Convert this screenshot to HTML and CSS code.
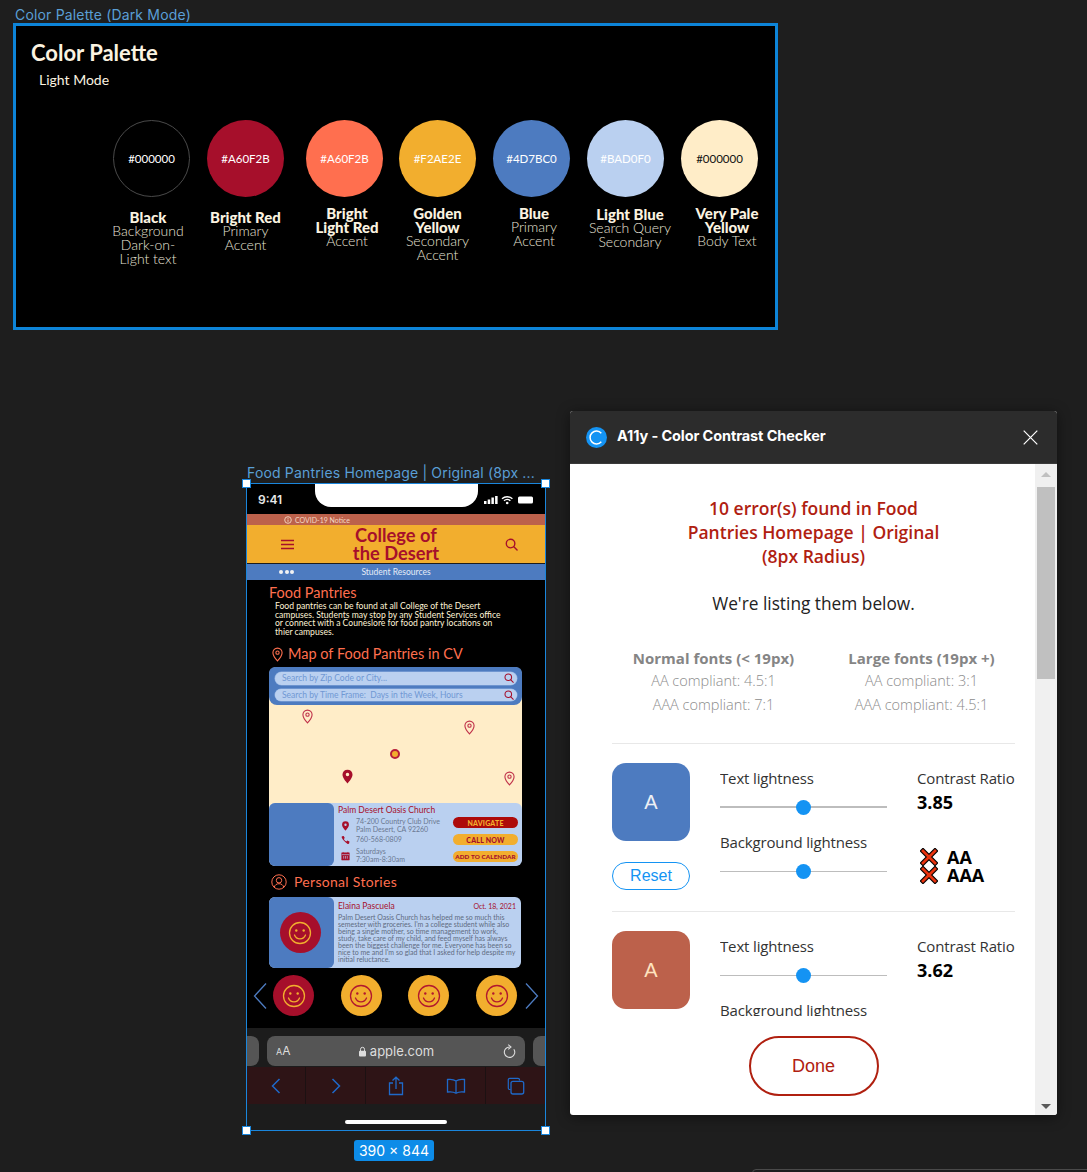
FILE: index.html
```html
<!DOCTYPE html>
<html lang="en">
<head>
<meta charset="utf-8">
<title>Design canvas</title>
<link rel="stylesheet" href="styles.css">
</head>
<body>
<svg class="defs" width="0" height="0" aria-hidden="true">
  <defs>
    <symbol id="pin-outline" viewBox="0 0 12 16"><path d="M6 1a5 5 0 0 0-5 5c0 3.5 5 9 5 9s5-5.500 5-9a5 5 0 0 0-5-5z" fill="none" stroke="currentColor" stroke-width="1.200"/><circle cx="6" cy="6" r="1.800" fill="none" stroke="currentColor" stroke-width="1.200"/></symbol>
    <symbol id="pin-solid" viewBox="0 0 12 16"><path fill-rule="evenodd" d="M6 .5A5.500 5.500 0 0 0 .5 6c0 3.800 5.500 9.500 5.500 9.500s5.500-5.700 5.500-9.500A5.500 5.500 0 0 0 6 .5zm0 7.300a1.900 1.900 0 1 1 0-3.800 1.900 1.900 0 0 1 0 3.800z" fill="currentColor"/></symbol>
    <symbol id="smile" viewBox="0 0 24 24"><circle cx="12" cy="12" r="10.500" fill="none" stroke="currentColor" stroke-width="1.300"/><circle cx="8.300" cy="9.500" r="1.200" fill="currentColor"/><circle cx="15.700" cy="9.500" r="1.200" fill="currentColor"/><path d="M6.500 14c1 2.600 3 3.800 5.500 3.800s4.500-1.200 5.500-3.800" fill="none" stroke="currentColor" stroke-width="1.300" stroke-linecap="round"/></symbol>
    <symbol id="search" viewBox="0 0 14 14"><circle cx="6" cy="6" r="4.600" fill="none" stroke="currentColor" stroke-width="1.500"/><path d="M9.500 9.500L13 13" stroke="currentColor" stroke-width="1.500" stroke-linecap="round"/></symbol>
    <symbol id="fail" viewBox="0 0 18 18"><path d="M3 3l12 12M15 3L3 15" stroke="#000" stroke-width="5" stroke-linecap="square"/><path d="M3 3l12 12M15 3L3 15" stroke="#e8330f" stroke-width="2.800" stroke-linecap="square"/></symbol>
  </defs>
</svg>

<div class="canvas-label palette-label">Color Palette (Dark Mode)</div>
<section class="palette">
  <h1 class="palette-title">Color Palette</h1>
  <p class="palette-sub">Light Mode</p>
  <div class="swatches">
    <div class="swatch">
      <div class="circle c-black">#000000</div>
      <div class="swatch-label lab-black"><b>Black</b>Background<br>Dark-on-<br>Light text</div>
    </div>
    <div class="swatch">
      <div class="circle c-red">#A60F2B</div>
      <div class="swatch-label"><b>Bright Red</b>Primary<br>Accent</div>
    </div>
    <div class="swatch sw-wide">
      <div class="circle c-lred">#A60F2B</div>
      <div class="swatch-label lab-lred"><b>Bright<br>Light Red</b>Accent</div>
    </div>
    <div class="swatch sw-tight">
      <div class="circle c-yellow">#F2AE2E</div>
      <div class="swatch-label lab-up"><b>Golden<br>Yellow</b>Secondary<br>Accent</div>
    </div>
    <div class="swatch">
      <div class="circle c-blue">#4D7BC0</div>
      <div class="swatch-label lab-blue"><b>Blue</b>Primary<br>Accent</div>
    </div>
    <div class="swatch">
      <div class="circle c-lblue">#BAD0F0</div>
      <div class="swatch-label lab-lblue"><b>Light Blue</b>Search Query<br>Secondary</div>
    </div>
    <div class="swatch">
      <div class="circle c-pale">#000000</div>
      <div class="swatch-label lab-pale"><b>Very Pale<br>Yellow</b>Body Text</div>
    </div>
  </div>
</section>

<div class="canvas-label phone-label">Food Pantries Homepage | Original (8px ...</div>
<section class="phone">
  <div class="status">
    <span class="clock">9:41</span>
    <div class="notch"></div>
    <svg class="status-icons" width="50" height="10" viewBox="0 0 50 10"><g fill="#fff"><rect x="0" y="6" width="2.500" height="3"/><rect x="3.700" y="4.500" width="2.500" height="4.500"/><rect x="7.400" y="2.500" width="2.500" height="6.500"/><rect x="11.100" y="1" width="2.500" height="8"/><rect x="34" y="1.500" width="15" height="7" rx="1.500"/></g><path d="M18 3.800c3-2.800 7.400-2.800 10.400 0M20 5.800c1.900-1.700 4.500-1.700 6.400 0" fill="none" stroke="#fff" stroke-width="1.400"/><circle cx="23.200" cy="8" r="1.300" fill="#fff"/></svg>
  </div>
  <div class="covid">
    <svg width="8" height="8" viewBox="0 0 8 8"><circle cx="4" cy="4" r="3.300" fill="none" stroke="#f4d9c4" stroke-width=".9"/><path d="M4 3.500v2.300M4 2v.8" stroke="#f4d9c4" stroke-width=".9"/></svg>
    <span>COVID-19 Notice</span>
  </div>
  <header class="site-head">
    <svg class="burger" width="13" height="11" viewBox="0 0 13 11"><path d="M0 1.500h13M0 5.500h13M0 9.500h13" stroke="#a60f2b" stroke-width="1.500"/></svg>
    <div class="site-name">College of<br>the Desert</div>
    <svg class="head-search"><use href="#search"/></svg>
  </header>
  <nav class="resources">
    <span class="dots"><i></i><i></i><i></i></span>
    <span class="res-text">Student Resources</span>
  </nav>
  <main class="phone-main">
    <h2 class="pantry-title">Food Pantries</h2>
    <p class="pantry-text">Food pantries can be found at all College of the Desert<br>campuses. Students may stop by any Student Services office<br>or connect with a Couneslore for food pantry locations on<br>thier campuses.</p>
    <h2 class="map-title"><svg class="title-pin"><use href="#pin-outline"/></svg>Map of Food Pantries in CV</h2>
    <div class="map-panel">
      <div class="search-panel">
        <div class="search-field"><span>Search by Zip Code or City...</span><svg><use href="#search"/></svg></div>
        <div class="search-field"><span>Search by Time Frame:&nbsp; Days in the Week, Hours</span><svg><use href="#search"/></svg></div>
      </div>
      <div class="map">
        <svg class="pin pin-1"><use href="#pin-outline"/></svg>
        <svg class="pin pin-2"><use href="#pin-outline"/></svg>
        <svg class="pin pin-3"><use href="#pin-solid"/></svg>
        <svg class="pin pin-4"><use href="#pin-outline"/></svg>
        <span class="map-dot"></span>
      </div>
      <div class="place-card">
        <div class="card-thumb"></div>
        <div class="place-body">
          <div class="place-name">Palm Desert Oasis Church</div>
          <div class="place-row">
            <div class="place-info">
              <div class="info-line l-addr"><svg class="info-icon"><use href="#pin-solid"/></svg><span>74-200 Country Club Drive<br>Palm Desert, CA 92260</span></div>
              <div class="info-line l-phone"><svg class="info-icon" viewBox="0 0 10 10"><path d="M1.200.8L3 .5l1.200 2.300-1 1c.5 1.300 1.500 2.300 2.800 2.800l1-1 2.400 1.200-.3 1.900c-.2.700-1 .9-1.700.7C4.500 7.500 2.200 5.300.8 2.300.6 1.600.7 1 1.200.8z" fill="currentColor"/></svg><span>760-568-0809</span></div>
              <div class="info-line l-cal"><svg class="info-icon" viewBox="0 0 10 10"><path d="M.8 1.500h8.400v8H.8zM2.500.5v2M7.500.5v2" fill="currentColor" stroke="currentColor" stroke-width=".6"/><path d="M1 3.500h8M3 5v3M5 5v3M7 5v3" stroke="#b9cff0" stroke-width=".7"/></svg><span>Saturdays<br>7:30am-8:30am</span></div>
            </div>
            <div class="place-actions">
              <span class="btn btn-red">NAVIGATE</span>
              <span class="btn btn-yellow">CALL NOW</span>
              <span class="btn btn-yellow btn-small">ADD TO CALENDAR</span>
            </div>
          </div>
        </div>
      </div>
    </div>
    <h2 class="stories-title"><svg width="16" height="16" viewBox="0 0 16 16"><g fill="none" stroke="currentColor" stroke-width="1"><circle cx="8" cy="8" r="7.200"/><circle cx="8" cy="6.300" r="2.700"/><path d="M3.200 13.300c.6-2.400 2.500-3.600 4.800-3.600s4.200 1.200 4.800 3.600"/></g></svg>Personal Stories</h2>
    <article class="story">
      <div class="story-thumb"><div class="face face-red face-big"><svg><use href="#smile"/></svg></div></div>
      <div class="story-body">
        <div class="story-head"><span class="story-name">Elaina Pascuela</span><span class="story-date">Oct. 18, 2021</span></div>
        <p class="story-text">Palm Desert Oasis Church has helped me so much this<br>semester with groceries. I'm a college student while also<br>being a single mother, so time management to work,<br>study, take care of my child, and feed myself has always<br>been the biggest challenge for me. Everyone has been so<br>nice to me and I'm so glad that I asked for help despite my<br>initial reluctance.</p>
      </div>
    </article>
    <div class="carousel">
      <svg class="chev" width="14" height="28" viewBox="0 0 14 28"><path d="M13 1.500L1.500 14 13 26.500" fill="none" stroke="#4d7bc0" stroke-width="1.300"/></svg>
      <div class="faces">
        <div class="face face-red"><svg><use href="#smile"/></svg></div>
        <div class="face face-yellow"><svg><use href="#smile"/></svg></div>
        <div class="face face-yellow"><svg><use href="#smile"/></svg></div>
        <div class="face face-yellow"><svg><use href="#smile"/></svg></div>
      </div>
      <svg class="chev" width="14" height="28" viewBox="0 0 14 28"><path d="M1 1.500L12.500 14 1 26.500" fill="none" stroke="#4d7bc0" stroke-width="1.300"/></svg>
    </div>
  </main>
  <div class="safari">
    <div class="tab-stub stub-left"></div>
    <div class="url-bar">
      <span class="aa"><small>A</small>A</span>
      <span class="url"><svg width="9" height="11" viewBox="0 0 9 11"><path d="M2.500 5V3.300a2 2 0 0 1 4 0V5" fill="none" stroke="#ddd" stroke-width="1"/><rect x="1" y="4.800" width="7" height="5.700" rx="1" fill="#ddd"/></svg>apple.com</span>
      <svg class="reload" width="13" height="14" viewBox="0 0 13 14"><path d="M10.800 5.200A5.200 5.200 0 1 1 6.500 3" fill="none" stroke="#ddd" stroke-width="1.100"/><path d="M5.200.6L8 3 5.200 5.400" fill="none" stroke="#ddd" stroke-width="1.100"/></svg>
    </div>
    <div class="tab-stub stub-right"></div>
  </div>
  <div class="toolbar">
    <div class="tool"><svg width="10" height="16" viewBox="0 0 10 16"><path d="M8.500 1L1.500 8l7 7" fill="none" stroke="#1f69c9" stroke-width="1.500"/></svg></div>
    <div class="tool"><svg width="10" height="16" viewBox="0 0 10 16"><path d="M1.500 1l7 7-7 7" fill="none" stroke="#1f69c9" stroke-width="1.500"/></svg></div>
    <div class="tool"><svg width="16" height="20" viewBox="0 0 16 20"><path d="M5 7H1.500v11.500h13V7H11M8 13V1.500M4.500 4.500L8 1.200l3.500 3.300" fill="none" stroke="#1f69c9" stroke-width="1.300"/></svg></div>
    <div class="tool"><svg width="20" height="16" viewBox="0 0 20 16"><path d="M10 3c-2-1.500-5-2-8.500-1.500V14c3.500-.5 6.500 0 8.500 1.200 2-1.200 5-1.700 8.500-1.200V1.500C15 1 12 1.500 10 3zm0 0v12" fill="none" stroke="#1f69c9" stroke-width="1.300"/></svg></div>
    <div class="tool"><svg width="18" height="18" viewBox="0 0 18 18"><path d="M3.500 12.500H2.800a1.500 1.500 0 0 1-1.500-1.500V2.800a1.500 1.500 0 0 1 1.500-1.500H11a1.500 1.500 0 0 1 1.500 1.500v.7" fill="none" stroke="#1f69c9" stroke-width="1.200"/><rect x="4" y="4.300" width="12.700" height="12.700" rx="2" fill="none" stroke="#1f69c9" stroke-width="1.300"/></svg></div>
  </div>
  <div class="home-area"><div class="home-bar"></div></div>
  <i class="handle h-tl"></i><i class="handle h-tr"></i><i class="handle h-bl"></i><i class="handle h-br"></i>
</section>
<div class="size-badge">390 × 844</div>

<section class="modal">
  <header class="modal-head">
    <svg class="modal-logo" width="21" height="21" viewBox="0 0 21 21"><circle cx="10.500" cy="10.500" r="10.500" fill="#1493f3"/><path d="M15.300 6.300a6.400 6.400 0 1 0 0 8.400" fill="none" stroke="#fff" stroke-width="1.500"/></svg>
    <span class="modal-title">A11y - Color Contrast Checker</span>
    <svg class="modal-close" width="15" height="15" viewBox="0 0 15 15"><path d="M.7.700l13.600 13.600M14.300.700L.7 14.300" stroke="#fff" stroke-width="1.200"/></svg>
  </header>
  <div class="modal-main">
    <div class="modal-content">
      <div class="scroll-area">
        <h2 class="err-title">10 error(s) found in Food<br>Pantries Homepage | Original<br>(8px Radius)</h2>
        <p class="err-sub">We're listing them below.</p>
        <div class="legend">
          <div class="legend-col"><b>Normal fonts (&lt; 19px)</b><span>AA compliant: 4.5:1</span><span>AAA compliant: 7:1</span></div>
          <div class="legend-col"><b>Large fonts (19px +)</b><span>AA compliant: 3:1</span><span>AAA compliant: 4.5:1</span></div>
        </div>
        <div class="result">
          <div class="result-left">
            <div class="sample sample-blue">A</div>
            <button class="reset">Reset</button>
          </div>
          <div class="result-mid">
            <div class="slide-label">Text lightness</div>
            <div class="slider slider-thick"><i></i></div>
            <div class="slide-label label-second">Background lightness</div>
            <div class="slider"><i></i></div>
          </div>
          <div class="result-right">
            <div class="slide-label">Contrast Ratio</div>
            <div class="ratio">3.85</div>
            <div class="grades">
              <div class="grade"><svg><use href="#fail"/></svg>AA</div>
              <div class="grade"><svg><use href="#fail"/></svg>AAA</div>
            </div>
          </div>
        </div>
        <div class="result">
          <div class="result-left">
            <div class="sample sample-red">A</div>
          </div>
          <div class="result-mid">
            <div class="slide-label">Text lightness</div>
            <div class="slider"><i></i></div>
            <div class="slide-label label-second">Background lightness</div>
          </div>
          <div class="result-right">
            <div class="slide-label">Contrast Ratio</div>
            <div class="ratio">3.62</div>
          </div>
        </div>
      </div>
      <div class="modal-foot"><button class="done">Done</button></div>
    </div>
    <div class="scrollbar">
      <span class="arrow-up"></span>
      <span class="thumb"></span>
      <span class="arrow-down"></span>
    </div>
  </div>
</section>
<div class="next-frame"></div>
</body>
</html>
```

FILE: styles.css
```css
* { box-sizing: border-box; }
html, body { margin: 0; padding: 0; }
body {
  width: 1087px; height: 1172px; overflow: hidden; position: relative;
  background: #1e1e1e; font-family: "Open Sans", sans-serif;
}
.defs { position: absolute; }
h1, h2, p { margin: 0; font-weight: inherit; }
svg { display: block; flex: none; }
use { color: inherit; }

.canvas-label {
  position: absolute; font: 400 14px/16px Inter, sans-serif; color: #5a9fd6; white-space: nowrap; letter-spacing: .17px;
}
.palette-label { left: 15px; top: 7px; }
.phone-label { left: 247px; top: 465px; }

/* Palette frame */
.palette {
  position: absolute; left: 13px; top: 23px; width: 765px; height: 307px;
  background: #000; border: 3px solid #0d84d8; padding: 14px 0 0 15px;
  font-family: Lato, sans-serif; color: #fbf3e0;
}
.palette-title { font-size: 22px; line-height: 26px; font-weight: 700; }
.palette-sub { font-size: 14px; line-height: 18px; margin: 5px 0 0 8px; }
.swatches { display: flex; gap: 17px; margin: 31px 0 0 82px; }
.swatch { width: 77px; display: flex; flex-direction: column; align-items: center; }
.sw-wide { margin-left: 5px; }
.sw-tight { margin-left: -1px; }
.circle {
  width: 77px; height: 77px; border-radius: 50%; display: flex; align-items: center; justify-content: center;
  font-size: 11.500px; color: #fff; flex: none;
}
.c-black { background: #000; border: 1px solid #4a4a4a; }
.c-red { background: #a60f2b; }
.c-lred { background: #ff6f4f; }
.c-yellow { background: #f2ae2e; }
.c-blue { background: #4d7bc0; }
.c-lblue { background: #bad0f0; }
.c-pale { background: #ffedc8; color: #111; }
.swatch-label {
  width: 110px; flex: none; margin-top: 13px; text-align: center;
  font-size: 14px; line-height: 14px; font-weight: 300; color: #e6e2d6;
}
.swatch-label b { display: block; font-size: 15px; font-weight: 900; color: #fbf3e0; }
.lab-black { margin-right: 7px; }
.lab-lred { margin-top: 9px; margin-left: 5px; }
.lab-up { margin-top: 9px; }
.lab-blue { margin-top: 9px; margin-left: 5px; }
.lab-lblue { margin-top: 10px; margin-left: 9px; }
.lab-pale { margin-top: 9px; margin-left: 15px; }

/* Phone frame */
.phone {
  position: absolute; left: 246px; top: 483px; width: 300px; height: 648px;
  border: 1px solid #1a86dc; background: #1c1c1c; display: flex; flex-direction: column;
  font-family: Lato, sans-serif;
}
.handle {
  position: absolute; width: 9px; height: 9px; background: #fff; border: 1px solid #1a86dc;
}
.h-tl { left: -5px; top: -5px; }
.h-tr { right: -5px; top: -5px; }
.h-bl { left: -5px; bottom: -5px; }
.h-br { right: -5px; bottom: -5px; }
.status {
  height: 30px; background: #000; flex: none; display: flex; justify-content: space-between;
  padding: 0 11px 0 11px; position: relative;
}
.clock { font: 600 12px/32px Inter, sans-serif; color: #e8e8e8; }
.notch {
  position: absolute; left: 68px; top: 0; width: 163px; height: 23px; background: #fff;
  border-radius: 0 0 16px 16px;
}
.status-icons { margin-top: 11px; }
.covid {
  height: 11px; background: #bc614b; flex: none; display: flex; align-items: center; gap: 3px;
  padding-left: 37px; font-size: 7px; color: #f4d9c4;
}
.site-head {
  height: 38px; flex: none; background: #f2ae2e; display: grid; grid-template-columns: 1fr auto 1fr;
  align-items: center; color: #a60f2b;
}
.burger { margin-left: 34px; }
.site-name { font-size: 18.300px; line-height: 18px; font-weight: 700; text-align: center; padding-bottom: 1px; }
.head-search { width: 13px; height: 13px; justify-self: end; margin-right: 27px; }
.resources {
  height: 16px; margin-top: 1px; flex: none; background: #4d7bc0; display: grid;
  grid-template-columns: 1fr auto 1fr; align-items: center; color: #e5ecf7; font-size: 8.500px; font-weight: 400;
}
.dots { display: flex; gap: 1.500px; padding-left: 32px; }
.dots i { width: 4px; height: 4px; border-radius: 50%; background: #f2f2f2; }
.phone-main {
  height: 448px; flex: none; background: #000; padding: 6px 0 0 22px; color: #ff6f4f;
}
.pantry-title { font-size: 14.500px; line-height: 14px; font-weight: 400; }
.pantry-text { margin: 2px 0 0 6px; font-size: 8.600px; line-height: 8.500px; color: #fff3d6; white-space: nowrap; }
.map-title {
  display: flex; align-items: center; gap: 5px; margin: 10px 0 0 3px; font-size: 14.500px; line-height: 16px; font-weight: 400;
}
.title-pin { width: 11px; height: 15px; }
.map-panel {
  margin-top: 5px; width: 253px; height: 199px; display: flex; flex-direction: column;
  background: #ffedc8; border-radius: 8px;
}
.search-panel {
  height: 38px; flex: none; background: #4d7bc0; border-radius: 6px 6px 8px 8px;
  padding: 5px 5px 4px 6px; display: flex; flex-direction: column; gap: 4px;
}
.search-field {
  flex: 1; background: #bad0f0; border-radius: 7px; display: flex; align-items: center; justify-content: space-between;
  padding: 0 3px 0 7px; font-size: 8.500px; color: #7098d4; box-shadow: 0 0 0 .5px #8fb0e0; white-space: nowrap;
}
.search-field svg { width: 10px; height: 10px; color: #a60f2b; }
.map { flex: 1; position: relative; }
.pin { position: absolute; width: 11px; height: 15px; color: #c0324a; }
.pin-1 { left: 33px; top: 4px; }
.pin-2 { left: 195px; top: 15px; }
.pin-3 { left: 73px; top: 64px; color: #a60f2b; }
.pin-4 { left: 235px; top: 66px; }
.map-dot {
  position: absolute; left: 121px; top: 44px; width: 10px; height: 10px; border-radius: 50%;
  background: #f2ae2e; border: 2px solid #b81f3a;
}
.place-card {
  height: 63px; flex: none; background: #bad0f0; border-radius: 6px; display: flex; color: #6a7890;
}
.card-thumb { width: 65px; flex: none; background: #4d7bc0; border-radius: 6px; }
.place-body { flex: 1; padding: 2px 4px 0 4px; min-width: 0; }
.place-name { font-size: 8.500px; line-height: 10px; color: #a60f2b; }
.place-row { display: flex; justify-content: space-between; }
.place-info { display: flex; flex-direction: column; font-size: 7px; line-height: 7.500px; padding-top: 3px; }
.info-line { display: flex; align-items: center; gap: 6px; padding-left: 3px; white-space: nowrap; }
.info-icon { width: 9px; height: 10px; color: #a60f2b; }
.l-phone { margin-top: 2px; }
.l-cal { margin-top: 3px; }
.place-actions { display: flex; flex-direction: column; gap: 6px; width: 65px; padding-top: 2px; }
.btn {
  height: 11px; border-radius: 6px; display: flex; align-items: center; justify-content: center;
  font-size: 7px; font-weight: 900; white-space: nowrap; letter-spacing: .2px;
}
.btn-red { background: #ad0a0a; color: #f2ae2e; }
.btn-yellow { background: #f2ae2e; color: #a60f2b; }
.btn-small { font-size: 6.300px; letter-spacing: .1px; }
.stories-title {
  display: flex; align-items: center; gap: 7px; margin: 8px 0 0 2px; font-size: 14px; line-height: 16px; font-weight: 400; letter-spacing: .3px;
}
.story {
  margin-top: 7px; width: 252px; height: 71px; background: #bad0f0; border-radius: 6px; display: flex;
}
.story-thumb {
  width: 65px; flex: none; background: #4d7bc0; border-radius: 6px; display: flex; align-items: center; justify-content: center; padding-right: 3px;
}
.face {
  width: 41px; height: 41px; border-radius: 50%; display: flex; align-items: center; justify-content: center; flex: none;
}
.face svg { width: 24px; height: 24px; }
.face-red { background: #a60f2b; color: #f2ae2e; }
.face-yellow { background: #f2ae2e; color: #b2182f; }
.story-body { flex: 1; min-width: 0; padding: 4px 5px 0 4px; }
.story-head { display: flex; justify-content: space-between; align-items: baseline; color: #a60f2b; }
.story-name { font-size: 8.500px; line-height: 10px; }
.story-date { font-size: 7px; }
.story-text { margin-top: 2.500px; font-size: 7px; line-height: 7px; color: #5f6b80; white-space: nowrap; }
.carousel {
  display: flex; align-items: center; margin: 7px 0 0 -16px;
}
.faces { display: flex; gap: 26.700px; margin: 0 8px 0 6px; }
.safari {
  height: 39px; flex: none; background: #1c1c1c; display: flex; align-items: flex-start; justify-content: space-between;
  padding-top: 8px;
}
.tab-stub { width: 12px; height: 30px; background: #555; }
.stub-left { border-radius: 0 8px 8px 0; }
.stub-right { border-radius: 8px 0 0 8px; }
.url-bar {
  width: 258px; height: 30px; border-radius: 8px; background: #555; display: grid;
  grid-template-columns: 1fr auto 1fr; align-items: center; padding: 0 9px; color: #ddd;
}
.aa { font: 400 12px/14px Inter, sans-serif; }
.aa small { font-size: 9px; }
.url { display: flex; align-items: center; gap: 3px; font: 400 13px/16px Inter, sans-serif; }
.reload { justify-self: end; }
.toolbar { height: 37px; flex: none; background: #2e1416; display: grid; grid-template-columns: 59px 60px 60px 60px 1fr; }
.tool { display: flex; align-items: center; justify-content: center; border-right: 1px solid #1c1112; }
.tool:nth-child(3) { border-right-color: #2e1416; }
.tool:last-child { border: 0; }
.home-area { flex: 1; background: #1c1c1c; display: flex; justify-content: center; align-items: flex-end; padding-bottom: 6px; }
.home-bar { width: 102px; height: 4px; border-radius: 2px; background: #fff; }
.size-badge {
  position: absolute; left: 354px; top: 1140px; width: 80px; height: 21px; border-radius: 3px;
  background: #0d8ce8; color: #fff; font: 400 14px/21px Inter, sans-serif; text-align: center;
}

/* Modal */
.modal {
  position: absolute; left: 570px; top: 411px; width: 487px; height: 704px; display: flex; flex-direction: column;
  border-radius: 3px; overflow: hidden; box-shadow: 0 2px 14px rgba(0,0,0,.45); background: #fff;
}
.modal-head {
  height: 53px; flex: none; background: #2c2c2c; display: flex; align-items: center; padding: 0 19px 0 16px; color: #fff;
  border-bottom: 1px solid #3a3a3a;
}
.modal-title { font: 700 14.500px/18px Inter, sans-serif; margin: -2px 0 0 10px; letter-spacing: -.1px; }
.modal-close { margin-left: auto; }
.modal-main { flex: 1; display: flex; min-height: 0; }
.modal-content { flex: 1; min-width: 0; padding: 0 20px 0 42px; display: flex; flex-direction: column; }
.scroll-area { height: 552px; flex: none; overflow: hidden; }
.err-title {
  margin-top: 32px; text-align: center; font-size: 17.500px; line-height: 24px; font-weight: 600; color: #b02010;
}
.err-sub { margin-top: 24px; text-align: center; font-size: 17.300px; line-height: 24px; color: #222; font-weight: 400; }
.legend { display: grid; grid-template-columns: 208px 203px; margin-top: 31px; height: 97px; text-align: center; border-bottom: 1px solid #e8e8e8; }
.legend-col { width: 203px; display: flex; flex-direction: column; font-size: 14.500px; line-height: 24px; color: #8c8c8c; font-weight: 300; }
.legend-col b { font-size: 15px; line-height: 22px; color: #858585; font-weight: 700; }
.result { display: grid; grid-template-columns: 108px 197px 1fr; padding-top: 19px; height: 168px; border-bottom: 1px solid #e8e8e8; }
.result-left { display: flex; flex-direction: column; }
.result-mid { padding-top: 5px; }
.sample {
  width: 78px; height: 78px; border-radius: 14px; display: flex; align-items: center; justify-content: center;
  font: 400 20px/1 "Liberation Sans", sans-serif;
}
.sample-blue { background: #4d7bc0; color: #eef0f4; }
.sample-red { background: #bc614b; color: #ffe3bf; }
.reset {
  margin-top: 21px; width: 78px; height: 28px; border: 1px solid #1493f3; border-radius: 14px; background: #fff;
  color: #1493f3; font: 400 16px/1 "Liberation Sans", sans-serif; padding: 0;
}
.slide-label { font-size: 15px; line-height: 20px; color: #333; white-space: nowrap; letter-spacing: -.15px; overflow: hidden; }
.result-right { overflow: hidden; padding-top: 5px; }
.slider {
  width: 167px; height: 16px; margin-top: 11px; display: flex; justify-content: center; align-items: center;
  background: linear-gradient(#bdbdbd, #bdbdbd) center / 100% 1px no-repeat;
}
.slider-thick { background-size: 100% 2px; }
.slider i { width: 15px; height: 15px; border-radius: 50%; background: #1493f3; }
.label-second { margin-top: 17px; }
.ratio { margin-top: 2px; font-size: 18px; line-height: 24px; font-weight: 700; color: #000; }
.grades { margin-top: 34px; margin-left: 3px; }
.grade { display: flex; align-items: center; gap: 9px; height: 18px; font: 700 18px/18px "Open Sans", sans-serif; color: #000; }
.grade svg { width: 18px; height: 18px; }
.modal-foot { flex: 1; display: flex; justify-content: center; padding-top: 20px; }
.done {
  width: 130px; height: 60px; border: 2px solid #b02010; border-radius: 30px; background: #fff; color: #b02010;
  font: 400 18px/1 "Liberation Sans", sans-serif; padding: 0;
}
.scrollbar {
  width: 22px; flex: none; background: #f0f0f0; display: flex; flex-direction: column; align-items: center; padding-top: 8px;
}
.arrow-up { width: 0; height: 0; border: 5px solid transparent; border-top: 0; border-bottom: 5px solid #c0c0c0; }
.thumb { width: 18px; height: 192px; background: #c0c0c0; margin-top: 10px; }
.arrow-down { width: 0; height: 0; border: 5px solid transparent; border-bottom: 0; border-top: 5px solid #5a5a5a; margin-top: auto; margin-bottom: 6px; }
.next-frame {
  position: absolute; left: 752px; top: 1169px; width: 340px; height: 20px; border: 1px solid #4a4a4a; border-radius: 4px;
}
```
